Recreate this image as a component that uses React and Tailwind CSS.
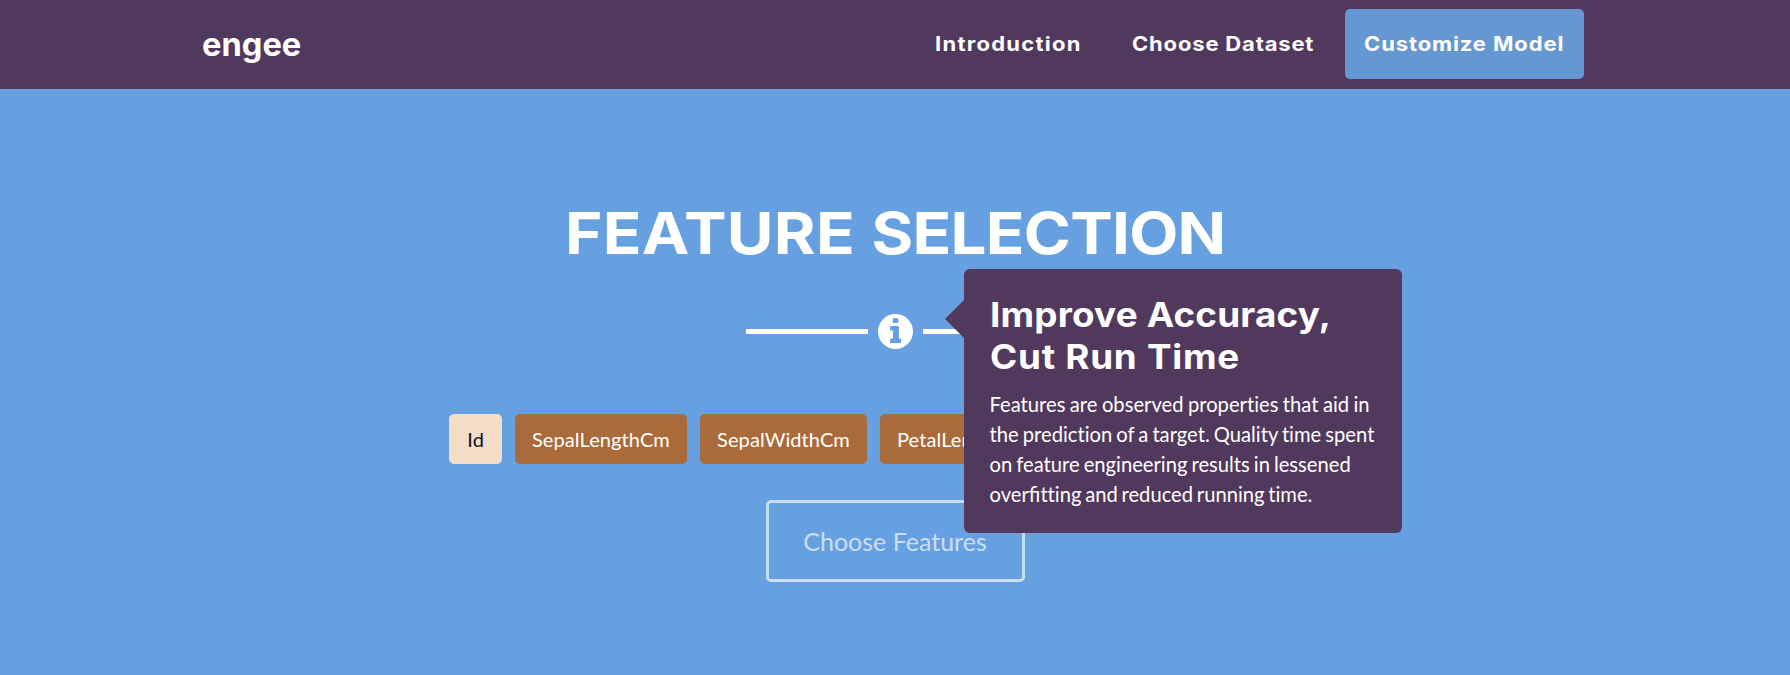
import React from "react";

const features = ["SepalLengthCm", "SepalWidthCm", "PetalLengthCm", "PetalWidthCm", "Species"];

function InfoIcon() {
  return (
    <svg viewBox="0 0 35 35" className="block size-[35px] shrink-0" aria-label="Info">
      <path
        fill="currentColor"
        fillRule="evenodd"
        d="M17.5 0a17.5 17.5 0 1 0 0 35a17.5 17.5 0 1 0 0-35zM15.4 4.3h4.4q.6 0 .6.6v3.6q0 .6-.6.6h-4.4q-.6 0-.6-.6v-3.6q0-.6.6-.6zM12.7 12h7.6q.6 0 .6.6v12h1.5q.6 0 .6.6v3.3q0 .6-.6.6h-9.7q-.6 0-.6-.6v-3.3q0-.6.6-.6h2.3v-8h-2.3q-.6 0-.6-.6v-3.4q0-.6.6-.6z"
      />
    </svg>
  );
}

function Navbar() {
  return (
    <header className="flex h-[89px] items-start justify-between bg-[#51395e] pt-[9px] pr-[206px] pl-[202px] font-[Inter,sans-serif] font-bold">
      <a className="flex h-[72px] origin-left scale-x-[1.02] items-center text-[32px] leading-none">engee</a>
      <nav className="flex h-[70px] items-center text-[20px] leading-none whitespace-nowrap">
        <a className="w-[197px]">
          <span className="inline-block origin-left scale-x-110 tracking-[1.15px]">Introduction</span>
        </a>
        <a className="w-[213px]">
          <span className="inline-block origin-left scale-x-110 tracking-[0.75px]">Choose Dataset</span>
        </a>
        <a className="flex h-[70px] w-[239px] items-center rounded-[5px] bg-[#6797d2] pl-[19px]">
          <span className="inline-block origin-left scale-x-110 tracking-[0.8px]">Customize Model</span>
        </a>
      </nav>
    </header>
  );
}

function Tooltip() {
  return (
    <div className="absolute top-0 left-[86px] z-10 -mt-[45px] h-[264px] w-[438px] rounded-md bg-[#51395e] pt-[25px] pl-[26px] text-left">
      <svg viewBox="0 0 19 38" className="absolute top-[31px] -left-[19px] h-[38px] w-[19px]">
        <path d="M19 0v38L0 19z" fill="#51395e" />
      </svg>
      <h3 className="w-fit origin-left scale-x-110 font-[Inter,sans-serif] text-[33.5px] leading-[42px] font-bold whitespace-nowrap">
        <span className="block tracking-[0.15px]">Improve Accuracy,</span>
        <span className="block tracking-[0.65px]">Cut Run Time</span>
      </h3>
      <p className="mt-[11px] text-[20.2px] leading-[30px] whitespace-nowrap [font-variant-ligatures:none]">
        <span className="block [word-spacing:-0.75px]">Features are observed properties that aid in</span>
        <span className="block [word-spacing:-1.1px]">the prediction of a target. Quality time spent</span>
        <span className="block [word-spacing:-1.15px]">on feature engineering results in lessened</span>
        <span className="block [word-spacing:-1.45px]">
          over<span className="[font-variant-ligatures:normal]">fi</span>tting and reduced running time.
        </span>
      </p>
    </div>
  );
}

export default function App() {
  return (
    <div className="min-h-[675px] bg-[#66a0e0] font-[Lato,sans-serif] text-white">
      <Navbar />
      <main className="flex flex-col items-center pt-[115px]">
        <h1 className="scale-x-110 font-[Inter,sans-serif] text-[58px] leading-[58px] font-bold whitespace-nowrap [word-spacing:1px]">
          <span className="tracking-[0.25px]">FEATURE </span>
          <span className="tracking-[-0.7px]">SELECTION</span>
        </h1>
        <div className="mt-[52px] flex items-center gap-[10px]">
          <div className="h-[5px] w-[122px] bg-white" />
          <div className="relative">
            <InfoIcon />
            <Tooltip />
          </div>
          <div className="h-[5px] w-[122px] bg-white" />
        </div>
        <div className="mt-[65px] flex h-[50px] gap-[12.4px] pr-[1.6px] text-[20px] tracking-[0.1px]">
          <span className="flex items-center rounded-[5px] bg-[#f5dec9] px-[18.2px] text-[#0b1020]">Id</span>
          {features.map((name) => (
            <span key={name} className="flex items-center rounded-[5px] bg-[#aa6b3b] px-[17.4px]">
              {name}
            </span>
          ))}
        </div>
        <button className="mt-9 flex h-[82px] w-[259px] items-center justify-center rounded-[5px] border-3 border-white pt-[2px] text-[25px] opacity-65">
          Choose Features
        </button>
      </main>
    </div>
  );
}
